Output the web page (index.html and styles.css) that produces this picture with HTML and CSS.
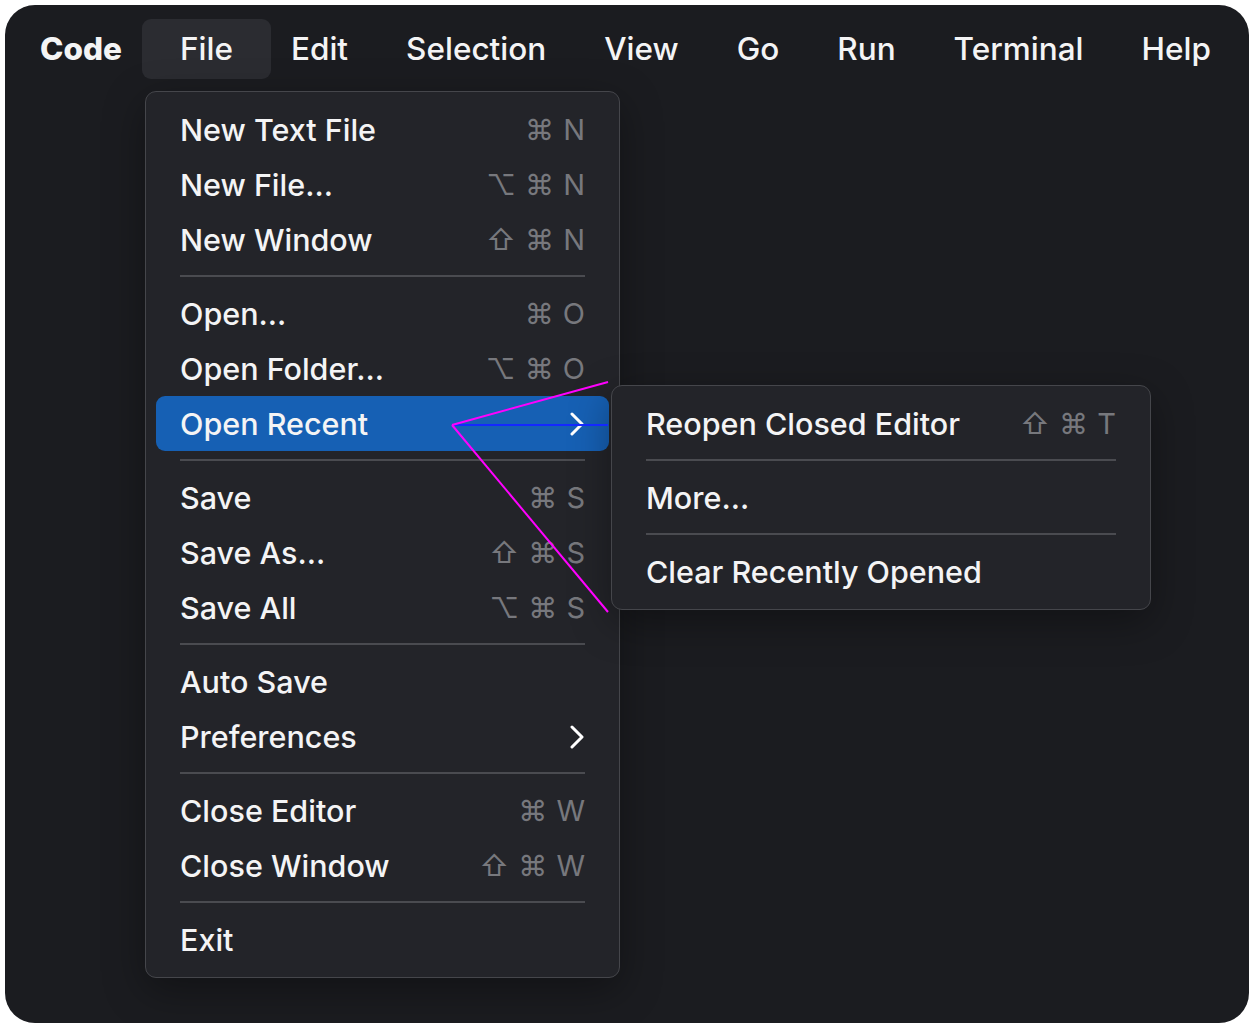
FILE: index.html
```html
<!DOCTYPE html>
<html lang="en">
<head>
    <meta charset="UTF-8">
    <meta name="viewport" content="width=device-width, initial-scale=1.0">
    <title>Menubar</title>
    <link rel="stylesheet" href="styles.css">
</head>
<body>
    <div class="window">
        <nav class="menubar">
            <div class="menubar-item brand">Code</div>
            <div class="menubar-item open">File</div>
            <div class="menubar-item">Edit</div>
            <div class="menubar-item">Selection</div>
            <div class="menubar-item">View</div>
            <div class="menubar-item">Go</div>
            <div class="menubar-item">Run</div>
            <div class="menubar-item">Terminal</div>
            <div class="menubar-item">Help</div>
        </nav>

        <!-- File menu -->
        <div class="menu file-menu">
            <div class="menu-item"><span>New Text File</span><span class="kbd">⌘ N</span></div>
            <div class="menu-item"><span>New File...</span><span class="kbd">⌥ ⌘ N</span></div>
            <div class="menu-item"><span>New Window</span><span class="kbd">⇧ ⌘ N</span></div>
            <div class="menu-separator"></div>
            <div class="menu-item"><span>Open...</span><span class="kbd">⌘ O</span></div>
            <div class="menu-item"><span>Open Folder...</span><span class="kbd">⌥ ⌘ O</span></div>
            <div class="menu-item active">
                <span>Open Recent</span>
                <svg class="chevron" viewBox="0 0 16 24" width="16" height="24"><path d="M3 2 L13 12 L3 22"/></svg>
            </div>
            <div class="menu-separator"></div>
            <div class="menu-item"><span>Save</span><span class="kbd">⌘ S</span></div>
            <div class="menu-item"><span>Save As...</span><span class="kbd">⇧ ⌘ S</span></div>
            <div class="menu-item"><span>Save All</span><span class="kbd">⌥ ⌘ S</span></div>
            <div class="menu-separator"></div>
            <div class="menu-item"><span>Auto Save</span></div>
            <div class="menu-item">
                <span>Preferences</span>
                <svg class="chevron" viewBox="0 0 16 24" width="16" height="24"><path d="M3 2 L13 12 L3 22"/></svg>
            </div>
            <div class="menu-separator"></div>
            <div class="menu-item"><span>Close Editor</span><span class="kbd">⌘ W</span></div>
            <div class="menu-item"><span>Close Window</span><span class="kbd">⇧ ⌘ W</span></div>
            <div class="menu-separator"></div>
            <div class="menu-item"><span>Exit</span></div>
        </div>

        <!-- Open Recent submenu -->
        <div class="menu sub-menu">
            <div class="menu-item"><span>Reopen Closed Editor</span><span class="kbd">⇧ ⌘ T</span></div>
            <div class="menu-separator"></div>
            <div class="menu-item"><span>More...</span></div>
            <div class="menu-separator"></div>
            <div class="menu-item"><span>Clear Recently Opened</span></div>
        </div>

        <!-- pointer safe-area debug lines -->
        <svg class="safe-area" width="1244" height="1018" viewBox="0 0 1244 1018">
            <line x1="447" y1="420" x2="603" y2="420" stroke="#1428ff" stroke-width="2"/>
            <line x1="447" y1="420" x2="603" y2="377" stroke="#f0f" stroke-width="2"/>
            <line x1="447" y1="420" x2="603" y2="607" stroke="#f0f" stroke-width="2"/>
        </svg>
    </div>
</body>
</html>
```

FILE: styles.css
```css
:root {
    --bg: #1b1c20;
    --menu-bg: #232429;
    --menu-border: #45464b;
    --trigger-open: #2b2c31;
    --text: #f4f4f5;
    --muted: #77787d;
    --separator: #4a4b50;
    --accent: #1660b4;
}

* {
    margin: 0;
    padding: 0;
    box-sizing: border-box;
}

body {
    background: #fff;
    font-family: 'Inter', 'Noto Sans', sans-serif;
    color: var(--text);
}

.window {
    position: relative;
    margin: 5px;
    width: 1244px;
    height: 1018px;
    background: var(--bg);
    border-radius: 30px;
    overflow: hidden;
}

.menubar {
    display: flex;
    justify-content: space-between;
    align-items: center;
    padding: 14px 38px 0 35px;
}

.menubar-item {
    height: 60px;
    line-height: 59px;
    padding: 0 38px;
    margin: 0 -38px;
    font-size: 31.5px;
    font-weight: 500;
    border-radius: 9px;
}

.menubar-item.brand {
    font-weight: 800;
}

.menubar-item.open {
    background: var(--trigger-open);
}

.menu {
    position: absolute;
    background: var(--menu-bg);
    border: 1px solid var(--menu-border);
    border-radius: 11px;
    padding: 10px;
    box-shadow: 0 12px 40px rgba(0, 0, 0, 0.35);
}

.file-menu {
    left: 140px;
    top: 86px;
    width: 475px;
}

.sub-menu {
    left: 606px;
    top: 380px;
    width: 540px;
    z-index: 2;
}

.menu-item {
    display: flex;
    align-items: center;
    justify-content: space-between;
    height: 55px;
    padding: 0 24px;
    border-radius: 9px;
    font-size: 30.5px;
    font-weight: 500;
}

.menu-item.active {
    background: var(--accent);
}

.kbd {
    color: var(--muted);
    font-family: 'Inter', 'DejaVu Sans', sans-serif;
    font-size: 29px;
    font-weight: 400;
    word-spacing: 1px;
}

.chevron {
    fill: none;
    stroke: #fff;
    stroke-width: 3;
    stroke-linecap: round;
    stroke-linejoin: round;
}

.menu-separator {
    height: 2px;
    margin: 8px 24px 9px;
    background: var(--separator);
}

.safe-area {
    position: absolute;
    left: 0;
    top: 0;
    z-index: 3;
    pointer-events: none;
}
```
